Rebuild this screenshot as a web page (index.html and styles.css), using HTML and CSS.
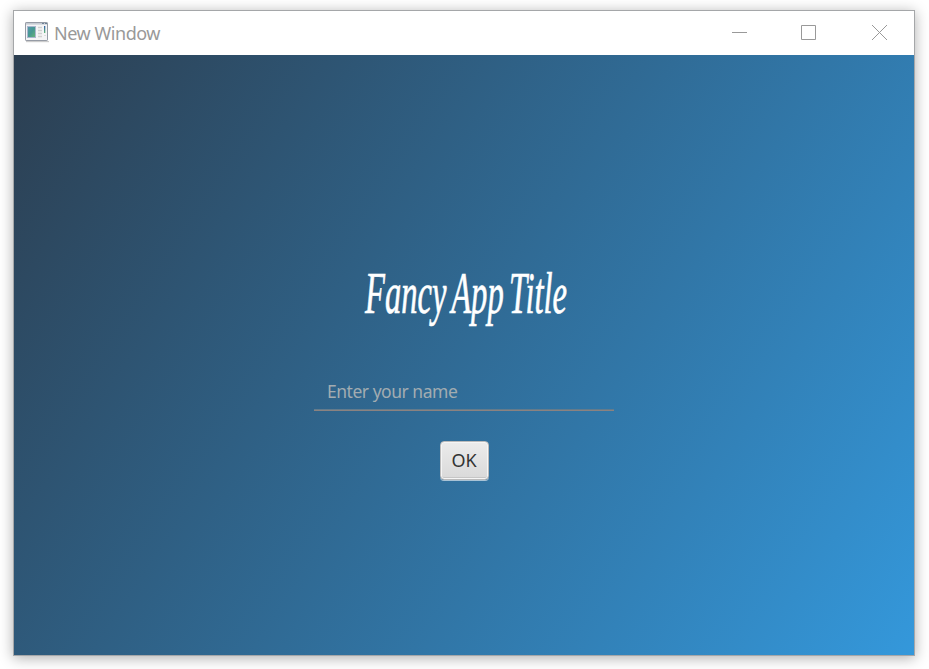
FILE: index.html
```html
<!DOCTYPE html>
<html lang="en">
<head>
<meta charset="utf-8">
<title>New Window</title>
<link rel="stylesheet" href="styles.css">
</head>
<body>
<main class="window">
  <header class="titlebar">
    <svg class="app-icon" width="24" height="21" viewBox="0 0 24 21" aria-hidden="true">
      <defs>
        <linearGradient id="pane" x1="0" y1="0" x2="1" y2="1"><stop offset="0" stop-color="#5797ad"/><stop offset=".5" stop-color="#459891"/><stop offset="1" stop-color="#6bb775"/></linearGradient>
        <linearGradient id="bar" x1="0" y1="0" x2="0" y2="1"><stop offset="0" stop-color="#345faa"/><stop offset="1" stop-color="#62b978"/></linearGradient>
      </defs>
      <rect x="1" y="19" width="23" height="1.2" fill="#ccc"/>
      <rect x=".5" y=".5" width="22" height="18" rx=".6" fill="#f4f4f5" stroke="#969ba5"/>
      <rect x="1" y="1" width="21" height="1.6" fill="#c6cbd3"/>
      <path d="M17 1.5h2M20 1.5h2" stroke="#6e8196"/>
      <rect x="2.5" y="4.5" width="8" height="11" fill="url(#pane)" stroke="#a9b6ce"/>
      <path d="M13 5.5h4M13 8.5h4M13 11.5h4M13 14.5h4" stroke="#d0d0d0" stroke-width="1.5"/>
      <rect x="19" y="4" width="1.3" height="7" fill="url(#bar)"/>
      <path d="M19 13.5h2" stroke="#dedede"/>
    </svg>
    <h1 class="window-title">New Window</h1>
    <div class="controls">
      <svg width="15" height="15" viewBox="0 0 15 15"><path d="M0 7.5h15" stroke="#999"/></svg>
      <svg width="15" height="15" viewBox="0 0 15 15"><path d="M.5.5h14v14H.5z" fill="none" stroke="#999"/></svg>
      <svg width="15" height="15" viewBox="0 0 15 15"><path d="M0 0l15 15M15 0L0 15" stroke="#999"/></svg>
    </div>
  </header>
  <section class="content">
    <svg class="logo" width="214" height="80" viewBox="0 0 214 80" role="img">
      <text x="8" y="47" textLength="202" lengthAdjust="spacingAndGlyphs">Fancy App Title</text>
    </svg>
    <input class="name" type="text" placeholder="Enter your name">
    <button class="ok">OK</button>
  </section>
</main>
</body>
</html>
```
FILE: styles.css
```css
* { box-sizing: border-box; }

body {
  margin: 0;
  height: 669px;
  padding: 10px 0 0 13px;
  overflow: hidden;
  background: #fff;
  font-family: "Open Sans", "Noto Sans", sans-serif;
}

.window {
  width: 902px;
  height: 646px;
  border: 1px solid #a5a7a9;
  box-shadow: 0 2px 13px rgba(0, 0, 0, .32);
}

.titlebar {
  display: flex;
  align-items: center;
  height: 44px;
  padding: 0 27px 0 11px;
  background: #fff;
}

.app-icon { margin-top: -1px; }

.window-title {
  margin: 0 0 0 5px;
  color: #999;
  font: 400 18px "Noto Sans", sans-serif;
  letter-spacing: -.45px;
}

.controls {
  display: flex;
  gap: 54px;
  margin: -1px 0 0 auto;
}

.controls svg { display: block; }

.controls svg:last-child { margin-left: 2px; }

.content {
  display: flex;
  flex-direction: column;
  align-items: center;
  height: 600px;
  padding-top: 211px;
  background: linear-gradient(123.69deg, #2c3e50, #3498db);
}

.logo {
  display: block;
  overflow: visible;
}

.logo text {
  fill: #fff;
  stroke: #fff;
  stroke-width: .7px;
  font: italic 400 60px "Liberation Serif", serif;
  word-spacing: -5px;
}

.name {
  width: 300px;
  height: 40px;
  margin-top: 25px;
  padding: 1px 13px 0;
  border: 0;
  border-bottom: 1px solid #8b8280;
  box-shadow: inset 0 -1px #637b8c;
  outline: 0;
  background: none;
  color: #fff;
  font: 17.5px "Noto Sans", sans-serif;
  letter-spacing: -.48px;
}

.name::placeholder {
  color: #a2acb1;
  opacity: 1;
}

.ok {
  width: 49px;
  height: 39px;
  margin-top: 30px;
  padding: 0 0 2px;
  border: 1px solid #bbb;
  border-radius: 4px;
  background: linear-gradient(#ececec, #d9d9d9);
  box-shadow: inset 0 0 0 1px #f5f5f5, inset 0 -2px #c6c6c6, 0 1px rgba(220, 230, 236, .7);
  color: #333;
  font: 18px "Noto Sans", sans-serif;
}
```
